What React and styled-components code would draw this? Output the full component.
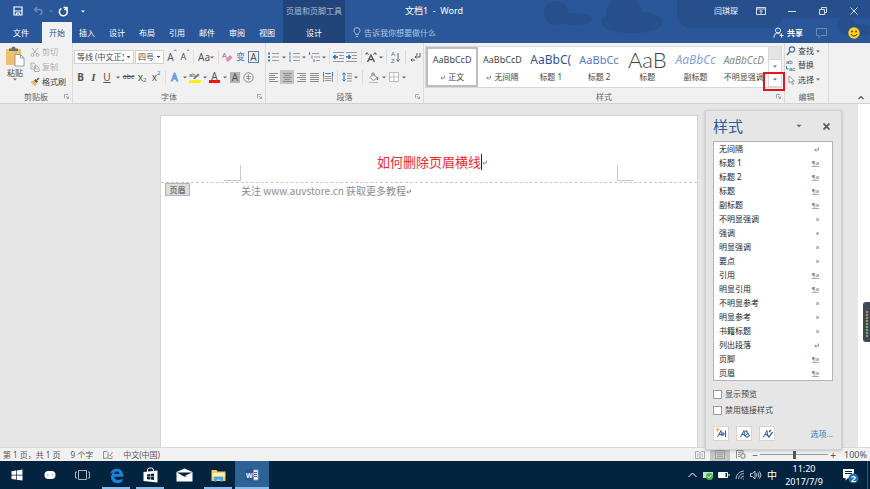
import React from 'react';
import styled, { createGlobalStyle, css } from 'styled-components';

const GlobalStyle = createGlobalStyle`
    * {
        box-sizing: border-box;
    }
    body {
        margin: 0;
        font-family: 'Noto Sans', 'Noto Sans CJK SC', sans-serif;
        font-size: 8px;
        line-height: 12px;
        color: #444;
        overflow: hidden;
    }
    button, input, select {
        font: inherit;
        color: inherit;
    }
    button {
        border: 0;
        padding: 0;
        background: none;
        white-space: nowrap;
    }
    svg {
        display: block;
        flex: none;
    }
    svg text {
        font-family: 'Liberation Sans', sans-serif;
    }
`;

const Window = styled.div`
    height: 100vh;
    display: flex;
    flex-direction: column;
    background: #e6e6e6;
`;

/* ---------- title bar and tabs ---------- */

const Header = styled.header`
    position: relative;
    background: #2a579a;
    color: #fff;
`;

const Clouds = styled.svg`
    position: absolute;
    top: 0;
    right: 0;
`;

const TitleBar = styled.div`
    position: relative;
    display: grid;
    grid-template-columns: 283px 62px 178px 1fr;
    height: 22px;
`;

const QuickAccess = styled.div`
    display: flex;
    align-items: center;
    padding-left: 8px;
`;

const BarButton = styled.button`
    width: ${(p) => p.$w || 20}px;
    height: 20px;
    display: flex;
    align-items: center;
    justify-content: center;
    gap: 3px;
    color: #fff;
    opacity: ${(p) => (p.$dim ? 0.3 : 1)};
`;

const ContextTitle = styled.div`
    background: #214579;
    color: #a9bcd8;
    line-height: 22px;
    text-align: center;
    white-space: nowrap;
`;

const DocTitle = styled.div`
    line-height: 21px;
    font-size: 9px;
    text-align: center;
`;

const WindowControls = styled.div`
    display: flex;
    align-items: center;
    justify-content: flex-end;
`;

const UserName = styled.span`
    margin-right: 7px;
`;

const TabBar = styled.nav`
    position: relative;
    display: flex;
    height: 21px;
`;

const Tab = styled.button`
    width: ${(p) => p.$w || 30}px;
    color: #fff;
    ${(p) =>
        p.$active &&
        css`
            background: #f1f1f1;
            color: #2a579a;
        `}
`;

const ContextTab = styled.button`
    width: 62px;
    margin-left: 1px;
    background: #214579;
    color: #fff;
`;

const TellMe = styled.button`
    display: flex;
    align-items: center;
    gap: 3px;
    padding-left: 8px;
    color: #b4c6e0;
`;

const TabBarEnd = styled.div`
    display: flex;
    align-items: center;
    margin-left: auto;
`;

/* ---------- ribbon ---------- */

const Ribbon = styled.section`
    display: flex;
    height: 61px;
    background: #f1f1f1;
    border-bottom: 1px solid #d2d2d2;
`;

const Group = styled.div`
    display: flex;
    flex-direction: column;
    width: ${(p) => p.$w}px;
    flex: ${(p) => (p.$grow ? '1 1 0' : 'none')};
    border-right: 1px solid #dadada;
`;

const GroupBody = styled.div`
    flex: 1;
    padding: ${(p) => p.$pad || '4px 1px 0'};
`;

const GroupLabel = styled.div`
    position: relative;
    height: 12px;
    line-height: 11px;
    text-align: center;
    color: #666;
`;

const Launcher = styled.button`
    position: absolute;
    right: 3px;
    top: 3px;
`;

const RibbonEnd = styled.div`
    width: 41px;
    display: flex;
    align-items: flex-end;
    justify-content: flex-end;
    padding: 0 6px 3px;
`;

const ToolRow = styled.div`
    display: flex;
    align-items: center;
    height: 20px;
`;

const Tool = styled.button`
    width: ${(p) => p.$w || 13}px;
    height: 14px;
    display: flex;
    align-items: center;
    justify-content: center;
    font-size: ${(p) => p.$size || 10}px;
    line-height: 12px;
    color: #555;
    background: ${(p) => (p.$active ? '#c5c5c5' : 'none')};
`;

const Divider = styled.i`
    width: 1px;
    height: 14px;
    margin: 0 ${(p) => p.$m || 2}px;
    background: #dcdcdc;
`;

const Combo = styled.select`
    appearance: none;
    width: ${(p) => p.$w}px;
    height: 14px;
    margin-right: 1px;
    padding: 0 9px 0 2px;
    border: 1px solid #d0d0d0;
    border-radius: 0;
    background:
        linear-gradient(45deg, transparent 50%, #555 50%) right 4px center / 2px 2px no-repeat,
        linear-gradient(-45deg, transparent 50%, #555 50%) right 2px center / 2px 2px no-repeat,
        #fff;
    line-height: 12px;
`;

const ClipboardLayout = styled.div`
    display: flex;
    gap: 1px;
`;

const PasteButton = styled.button`
    display: flex;
    flex-direction: column;
    align-items: center;
    width: 28px;
    padding-top: 2px;
    line-height: 11px;
`;

const Stack = styled.div`
    display: flex;
    flex-direction: column;
`;

const LabelledTool = styled.button`
    display: flex;
    align-items: center;
    gap: 2px;
    height: ${(p) => p.$h || 15}px;
    color: ${(p) => (p.$disabled ? '#b0b0b0' : '#444')};
`;

const Bold = styled.b`
    font-weight: 700;
`;

const Italic = styled.em`
    font-family: 'Liberation Serif', serif;
    font-size: 11px;
    font-weight: 700;
`;

const Strike = styled.s`
    font-size: 7px;
`;

const Underbar = styled.span`
    height: 12px;
    line-height: 10px;
    padding: 0 2px;
    border-bottom: 3px solid ${(p) => p.$color};
`;

const BoxedA = styled.span`
    width: 11px;
    line-height: 10px;
    border: 1px solid #5b82b8;
    text-align: center;
`;

const ShadedA = styled.span`
    width: 10px;
    line-height: 11px;
    background: #b5b5b5;
    text-align: center;
`;

const BlueA = styled.span`
    color: #eef5fc;
    -webkit-text-stroke: 1px #6a9fd8;
`;

const Pinyin = styled.span`
    font-size: 9px;
    color: #4c78b0;
`;

const Sub = styled.small`
    font-size: ${(p) => (p.$mark ? 8 : 6)}px;
    color: #2a6fbf;
    align-self: ${(p) => (p.$up ? 'flex-start' : 'flex-end')};
    line-height: 7px;
`;

const Gallery = styled.div`
    display: flex;
    height: 42px;
    border: 1px solid #d8d8d8;
    background: #fff;
`;

const StyleTile = styled.button`
    flex: 1 1 0;
    min-width: 0;
    overflow: hidden;
    display: flex;
    flex-direction: column;
    align-items: center;
    padding-top: ${(p) => (p.$active ? 0 : 2)}px;
    border: ${(p) => (p.$active ? '2px solid #bdbdbd' : '0')};
`;

const Preview = styled.span`
    height: 22px;
    line-height: 22px;
    font-family: ${(p) => p.$font || "'Noto Sans', sans-serif"};
    font-size: ${(p) => p.$size}px;
    font-weight: ${(p) => p.$weight || 400};
    font-style: ${(p) => (p.$italic ? 'italic' : 'normal')};
    color: ${(p) => p.$color || '#444'};
`;

const TileName = styled.span`
    display: flex;
    align-items: center;
    gap: 3px;
    line-height: 12px;
`;

const GalleryScroll = styled.div`
    position: relative;
    width: 13px;
    display: flex;
    flex-direction: column;
`;

const ScrollButton = styled.button`
    flex: 1;
    display: flex;
    align-items: center;
    justify-content: center;
    border-left: 1px solid #d8d8d8;
    border-bottom: 1px solid #d8d8d8;
    background: ${(p) => (p.$off ? '#e4e4e4' : '#fff')};
`;

const RedFrame = styled.span`
    position: absolute;
    right: -4px;
    bottom: -4px;
    width: 22px;
    height: 19px;
    border: 2px solid #e8141c;
    pointer-events: none;
`;

/* ---------- document ---------- */

const Workspace = styled.main`
    position: relative;
    flex: 1;
    display: flex;
    min-height: 0;
`;

const Canvas = styled.div`
    flex: 1;
    display: flex;
    padding: 11px 160px 0;
`;

const Page = styled.article`
    flex: 1;
    background: #fff;
    border: 1px solid #d4d4d4;
    border-bottom: 0;
`;

const PageHeader = styled.div`
    height: 67px;
    display: flex;
    align-items: flex-end;
    justify-content: space-between;
    padding: 0 63px 1px;
    border-bottom: 1px dashed #c8c8c8;
`;

const Corner = styled.i`
    width: 17px;
    height: 16px;
    border-bottom: 1px solid #c8c8c8;
    ${(p) => (p.$left ? 'border-right' : 'border-left')}: 1px solid #c8c8c8;
`;

const HeaderText = styled.h1`
    display: flex;
    align-items: center;
    margin: 0 0 9px;
    padding-left: 6px;
    font-size: 13px;
    font-weight: 400;
    line-height: 20px;
    color: #f0282d;
`;

const Caret = styled.i`
    width: 1px;
    height: 16px;
    background: #222;
`;

const PageBody = styled.div`
    display: flex;
    align-items: flex-start;
`;

const HeaderTag = styled.span`
    width: 25px;
    margin: 0 51px 0 4px;
    border: 1px solid #b4b4b4;
    background: #dcdcdc;
    line-height: 11px;
    text-align: center;
`;

const BodyText = styled.p`
    display: flex;
    align-items: center;
    margin: 0;
    font-family: 'Noto Sans CJK SC', sans-serif;
    font-size: 10px;
    line-height: 16px;
    color: #8c8c8c;
`;

const ScrollStrip = styled.div`
    width: 12px;
    display: flex;
    align-items: center;
    justify-content: flex-end;
    padding-top: 93px;
    background: #fff;
`;

const EdgeWidget = styled.div`
    width: 7px;
    height: 40px;
    padding: 9px 2px 5px 3px;
    border-radius: 3px 0 0 3px;
    background: #414958;
`;

const Meter = styled.div`
    height: 26px;
    background: repeating-linear-gradient(transparent 0 2px, #414958 2px 3px), linear-gradient(#c98d4e, #79b566 60%);
`;

/* ---------- styles pane ---------- */

const Pane = styled.aside`
    position: absolute;
    z-index: 1;
    top: 6px;
    right: 28px;
    width: 137px;
    padding: 6px 8px 8px 7px;
    border: 1px solid #d0d0d0;
    background: #e6e6e6;
    box-shadow: 0 1px 3px rgba(0, 0, 0, 0.2);
`;

const PaneHead = styled.div`
    display: flex;
    align-items: center;
    height: 24px;
    padding: 0 3px 6px 0;
    gap: 21px;
`;

const PaneTitle = styled.h2`
    margin: 0 auto 0 0;
    font-size: 15px;
    font-weight: 400;
    line-height: 18px;
    color: #2f5a9e;
`;

const StyleList = styled.ul`
    margin: 0;
    padding: 0;
    list-style: none;
    border: 1px solid #b4b4b4;
    background: #fff;
`;

const StyleItem = styled.button`
    display: flex;
    align-items: center;
    justify-content: space-between;
    width: 100%;
    height: 14px;
    padding: 0 13px 0 5px;
    color: #222;
`;

const Mark = styled.span`
    font-size: 6px;
    line-height: 6px;
    color: #777;
    border-bottom: ${(p) => (p.$under ? '1px solid #aaa' : '0')};
`;

const Checks = styled.div`
    display: flex;
    flex-direction: column;
    gap: 4px;
    padding: 7px 0 10px;
`;

const CheckLabel = styled.label`
    display: flex;
    align-items: center;
    gap: 3px;
`;

const CheckBox = styled.input`
    appearance: none;
    width: 9px;
    height: 9px;
    margin: 0;
    border: 1px solid #9a9a9a;
    background: #fff;
`;

const PaneFoot = styled.div`
    display: flex;
    align-items: center;
    gap: 7px;
`;

const PaneButton = styled.button`
    display: grid;
    place-items: center;
    width: 16px;
    height: 15px;
    border: 1px solid #d4d4d4;
    background: #fff;
`;

const OptionsLink = styled.a`
    margin-left: auto;
    color: #4472b0;
    text-decoration: none;
`;

/* ---------- status bar ---------- */

const StatusBar = styled.footer`
    display: flex;
    align-items: center;
    gap: 10px;
    height: 14px;
    padding: 0 3px;
    background: #f1f1f1;
    border-top: 1px solid #d8d8d8;
    color: #555;
`;

const Views = styled.div`
    display: flex;
    align-items: center;
    margin-left: auto;
`;

const ZoomRange = styled.input`
    appearance: none;
    width: 68px;
    height: 12px;
    margin: 0 1px;
    background: linear-gradient(#999, #999) center / 100% 1px no-repeat;
    &::-webkit-slider-thumb {
        appearance: none;
        width: 3px;
        height: 8px;
        background: #555;
    }
`;

const ZoomValue = styled.span`
    width: 30px;
    font-size: 9px;
    text-align: right;
`;

/* ---------- taskbar ---------- */

const Taskbar = styled.footer`
    display: flex;
    height: 28px;
    background: #04233f;
    color: #fff;
`;

const TaskButton = styled.button`
    display: grid;
    place-items: center;
    position: relative;
    width: ${(p) => (p.$app ? 34 : 33)}px;
    background: ${(p) => (p.$active ? '#2e6296' : 'none')};
    &::after {
        content: '';
        display: ${(p) => (p.$open ? 'block' : 'none')};
        position: absolute;
        bottom: 0;
        left: ${(p) => (p.$active ? 0 : 3)}px;
        right: ${(p) => (p.$active ? 0 : 3)}px;
        height: 2px;
        background: #86bdec;
    }
`;

const Tray = styled.div`
    display: flex;
    align-items: center;
    margin-left: auto;
`;

const TrayButton = styled.button`
    width: 16px;
    display: flex;
    justify-content: center;
    color: #fff;
    font-size: 10px;
`;

const Clock = styled.time`
    width: 48px;
    font-size: 9px;
    line-height: 13px;
    text-align: center;
`;

const Notifications = styled.button`
    width: 39px;
    padding-right: 8px;
    display: flex;
    justify-content: flex-end;
`;

const ShowDesktop = styled.button`
    align-self: stretch;
    width: 3px;
    border-left: 1px solid #3c566d;
`;

/* ---------- icons ---------- */

const Svg = ({ w = 12, h = 12, children, ...rest }) => (
    <svg
        width={w}
        height={h}
        viewBox={`0 0 ${w} ${h}`}
        fill="none"
        stroke="currentColor"
        aria-hidden="true"
        {...rest}>
        {children}
    </svg>
);

const Down = ({ w = 4, color = '#666' }) => (
    <svg width={w} height={w === 4 ? 3 : 4} viewBox="0 0 4 3" aria-hidden="true">
        <path d="M0 0.500h4L2 2.500z" fill={color} />
    </svg>
);

const SaveIcon = () => (
    <Svg w={10} h={10}>
        <path d="M1 1h8v8H1zM1 5h8M3.500 9V7h3v2" strokeWidth="1.200" />
    </Svg>
);

const UndoIcon = () => (
    <Svg w={11} h={10}>
        <path d="M4 1L1.500 3.500 4 6M2 3.500h4.500a2.500 2.500 0 0 1 0 5" strokeWidth="1.400" />
    </Svg>
);

const RedoIcon = () => (
    <Svg w={11} h={11}>
        <path d="M3.500 2.300A4 4 0 1 0 8.600 3.500" strokeWidth="1.500" />
        <path d="M5.500 1.500H9V5M9 1.500L6.500 4" strokeWidth="1.300" />
    </Svg>
);

const BulbIcon = () => (
    <Svg w={8} h={11}>
        <path
            d="M2.800 7.500C2.800 6 1 5.500 1 3.600a3 3 0 0 1 6 0c0 1.900-1.800 2.400-1.800 3.900zM2.800 9.500h2.400"
            strokeWidth="0.900"
        />
    </Svg>
);

const PersonIcon = () => (
    <Svg w={11} h={11}>
        <circle cx="5" cy="3.500" r="2.500" strokeWidth="0.900" />
        <path d="M1 10.500c0-3 1.500-4.500 4-4.500 1 0 2 .3 2.600 1M8.500 6.500v4M6.500 8.500h4" strokeWidth="0.900" />
    </Svg>
);

const SmileyIcon = () => (
    <Svg w={12} h={12} stroke="none">
        <circle cx="6" cy="6" r="5.700" fill="#ffd21f" />
        <circle cx="4" cy="4.500" r="0.900" fill="#533" />
        <circle cx="8" cy="4.500" r="0.900" fill="#533" />
        <path d="M3 7a3.200 3.200 0 0 0 6 0" stroke="#533" fill="none" />
    </Svg>
);

const LauncherIcon = () => (
    <Svg w={5} h={5} stroke="#888">
        <path d="M0.500 4V0.500H4M2 2l2.500 2.500M4.500 2.500v2h-2" strokeWidth="0.700" />
    </Svg>
);

const PasteIcon = () => (
    <Svg w={20} h={21} stroke="none">
        <path d="M1 3h15v16H1z" fill="#edc171" />
        <path d="M4 5V2.500h2.500a2 2 0 0 1 4 0H13V5z" fill="#6d6d6d" />
        <path d="M10 8.500h5.500l3.500 3.500v8H10z" fill="#fff" stroke="#888" strokeWidth="0.800" />
        <path d="M15.500 8.500V12H19" stroke="#888" strokeWidth="0.800" fill="none" />
    </Svg>
);

const CutIcon = () => (
    <Svg w={10} h={10}>
        <path d="M2 1l5 6M8 1L3 7" />
        <circle cx="2.500" cy="8" r="1.400" />
        <circle cx="7.500" cy="8" r="1.400" />
    </Svg>
);

const CopyIcon = () => (
    <Svg w={10} h={10}>
        <path d="M1 1h3l1.500 1.500V7H1zM4.500 4h2.500L9 6v3.500H4.500z" fill="#f1f1f1" />
        <path d="M6 7h1.500M2 4h1.500" />
    </Svg>
);

const BrushIcon = () => (
    <Svg w={10} h={10} stroke="none">
        <path d="M0.500 5l3-1.500 3.500 3.500-2 2.500z" fill="#eab95c" />
        <path d="M4 3.500L5.500 2 8 4.500 6.500 6z" fill="#555" />
        <path d="M7 3l2-2" stroke="#555" strokeWidth="1.500" />
    </Svg>
);

const EraserIcon = () => (
    <Svg w={11} h={12} stroke="none">
        <text x="0" y="7" fontSize="7" fill="#7a6a90">A</text>
        <path d="M3.500 8.500L8 4l2.500 2.500L6 11z" fill="#e38aa0" />
    </Svg>
);

const LINES = {
    left: [[0, 9], [0, 6], [0, 9], [0, 6]],
    center: [[0, 9], [1.5, 7.5], [0, 9], [1.5, 7.5]],
    right: [[0, 9], [3, 9], [0, 9], [3, 9]],
    justify: [[0, 9], [0, 9], [0, 9], [0, 9]],
};

const AlignIcon = ({ kind }) => (
    <Svg w={9} h={10} stroke="#8a8a8a">
        {LINES[kind].map(([a, b], i) => (
            <path key={i} d={`M${a} ${1.5 + i * 2}H${b}M${a} 9.500H${b}`} />
        ))}
    </Svg>
);

const DistributeIcon = () => (
    <Svg w={10} h={10} stroke="#999">
        <path d="M1.500 4.500h7M1.500 6.500h7M1.500 8.500h7" />
        <path d="M0.500 0v4M9.500 0v4M2 1.500h6" stroke="#3f7cc4" />
        <path d="M0.500 4v6M9.500 4v6" />
    </Svg>
);

const ListIcon = ({ kind }) => (
    <Svg w={11} h={10} stroke="#999">
        <path d={kind === 'multi' ? 'M3 1.500h7M5 5h6M7 8.500h4' : 'M4 1.500h7M4 5h7M4 8.500h7'} />
        <path
            d={
                kind === 'bullet'
                    ? 'M0 1.500h2M0 5h2M0 8.500h2'
                    : kind === 'number'
                        ? 'M1 0v3M1 3.500v3M1 7v3'
                        : 'M0.500 0v3M3 3.500v3M5 7v3'
            }
            stroke="#3f7cc4"
            strokeWidth={kind === 'bullet' ? 2 : 1}
        />
    </Svg>
);

const IndentIcon = ({ flip }) => (
    <Svg w={11} h={10} stroke="#999">
        <path d="M0 0.500h11M6 3.500h5M6 6.500h5M0 9.500h11" />
        <path
            d={flip ? 'M0 5h4M2.500 3l2 2-2 2' : 'M1 5h4M2.500 3l-2 2 2 2'}
            stroke="#2b6cb8"
            strokeWidth="1.300"
        />
    </Svg>
);

const ScaleIcon = () => (
    <Svg w={12} h={11} stroke="#555">
        <path d="M2.500 10L6 3l3.500 7M4 7.500h4" strokeWidth="1.400" />
        <path d="M1 1l3 1.500M11 1L8 2.500M1 3V1h2M11 3V1H9" strokeWidth="0.800" />
    </Svg>
);

const SortIcon = () => (
    <Svg w={11} h={14} stroke="none">
        <text x="1" y="6" fontSize="6" fill="#2b6cb8">A</text>
        <text x="1" y="13" fontSize="6" fill="#7b4fa0">Z</text>
        <path d="M8 3v8M6.500 9.500L8 11.500l1.500-2" stroke="#666" fill="none" />
    </Svg>
);

const MarksIcon = () => (
    <Svg w={11} h={10} stroke="#555">
        <path d="M10 1v4H5M6.500 3.500L5 5l1.500 1.500M7 1v2.500M1 8h4M2.500 6.500L1 8l1.500 1.500" />
    </Svg>
);

const SpacingIcon = () => (
    <Svg w={10} h={10} stroke="#999">
        <path d="M5 1.500h5M5 4h5M5 6.500h5M5 9h5" />
        <path d="M2 1v8M0.500 2.500L2 0.800l1.500 1.700M0.500 7.500L2 9.200l1.500-1.700" stroke="#2b6cb8" />
    </Svg>
);

const BucketIcon = () => (
    <Svg w={11} h={11} stroke="#888">
        <path d="M2 5.500L5.500 2 9 5.500 5.500 8.500z" fill="#fff" />
        <path d="M4 4V1h2v3" />
        <path d="M9.500 5v3" stroke="#3f7cc4" strokeWidth="1.500" />
        <path d="M1 10.500h9" stroke="#bbb" />
    </Svg>
);

const BorderIcon = () => (
    <Svg w={10} h={10} stroke="#bbb">
        <path d="M0.500 0.500h9v9h-9zM5 1v8M1 5h8" fill="#fff" />
    </Svg>
);

const HighlightIcon = () => (
    <Svg w={12} h={12} stroke="none">
        <text x="0" y="6" fontSize="6" fill="#555">ab</text>
        <path d="M4 7.500l5-5 1.500 1.500L6 8z" fill="#777" />
        <path d="M0 9h12v3H0z" fill="#ffee12" />
    </Svg>
);

const CircleIcon = () => (
    <Svg w={11} h={11} stroke="#888">
        <circle cx="5.500" cy="5.500" r="4.700" />
        <path d="M3 4.500h5M5.500 2.500v6M3.500 6.500h4" strokeWidth="0.800" />
    </Svg>
);

const FindIcon = () => (
    <Svg w={10} h={10} stroke="#3d6cae">
        <circle cx="6" cy="3.500" r="2.700" strokeWidth="1.200" />
        <path d="M4 5.500L1 9" strokeWidth="1.500" />
    </Svg>
);

const ReplaceIcon = () => (
    <Svg w={10} h={14} stroke="none">
        <text x="0" y="6" fontSize="6" fill="#555">ab</text>
        <text x="3" y="13" fontSize="6" fill="#2b5fa8">ac</text>
        <path d="M0.500 8v3h2" stroke="#2b5fa8" strokeWidth="0.800" fill="none" />
    </Svg>
);

const SelectIcon = () => (
    <Svg w={10} h={10} stroke="#888">
        <path d="M3 1v7l2-1.700L6.500 9.500l1-.5L6.200 6H8.500z" fill="#fff" strokeWidth="0.800" />
    </Svg>
);

const ReturnMark = () => (
    <Svg w={5} h={5} stroke="#777">
        <path d="M4.500 0.500V3H1M2.200 1.700L0.800 3l1.400 1.500" strokeWidth="0.800" />
    </Svg>
);

const PaneIcon = ({ kind }) => (
    <Svg w={11} h={11} stroke="none">
        {kind === 'new' && <path d="M0 0l4 1-1.500 1.500L1 4z" fill="#f0a84a" />}
        <path d="M1.500 9L5 2.500 5.500 8M3 6.500h2.500" stroke="#2f5a9e" fill="none" />
        {kind === 'new' && <path d="M7 8V4M9.500 2.500V9M6 6h4" stroke="#2f5a9e" />}
        {kind === 'inspect' && (
            <path d="M5.500 4L8 2.500V5M6 8l3-3 1.500 3-2.500 1.500z" stroke="#2f5a9e" fill="#dfe9f6" />
        )}
        {kind === 'manage' && (
            <path d="M5 6.500l2 2.500 3.500-5M7 4l2-2" stroke="#2f5a9e" fill="none" strokeWidth="1.300" />
        )}
    </Svg>
);

const BookIcon = () => (
    <Svg w={10} h={8} stroke="#999">
        <path d="M0.500 0.500H4L5 1.500 6 0.500h3.500v7H6L5 7 4 7.500H0.500zM5 1.500V7M2 3h1.500M2 5h1.500M6.500 3H8M6.500 5H8" strokeWidth="0.800" />
    </Svg>
);

const PrintViewIcon = () => (
    <Svg w={10} h={9} stroke="#999">
        <path d="M0.500 0.500h9v8h-9zM2 2.500h6M2 4.500h6M2 6.500h6" strokeWidth="0.800" />
    </Svg>
);

const WebViewIcon = () => (
    <Svg w={10} h={9} stroke="#777">
        <path d="M0.500 8.500v-8H7V3M2 2.500h3.500M2 4.500h2.500M2 6.500h2" strokeWidth="0.800" />
        <circle cx="7" cy="6" r="2.300" />
    </Svg>
);

const ProofIcon = () => (
    <Svg w={10} h={8} stroke="#888">
        <path d="M9 5v2.500H5.500L5 7 0.500 7.500v-7H4l1 1V7M6 3.500l1.200 1.500L9.500 1" strokeWidth="0.900" />
    </Svg>
);

const WindowsIcon = () => (
    <Svg w={12} h={12} stroke="none">
        <path d="M0.500 2.200L5 1.500v4.200H0.500zM5.700 1.400L11.500 0.500v5.200H5.700zM0.500 6.400H5v4.200L0.500 9.900zM5.700 6.400h5.800v5.200L5.700 10.700z" fill="#fff" />
    </Svg>
);

const CortanaIcon = () => (
    <Svg w={12} h={10} stroke="none">
        <rect x="0.500" y="1" width="11" height="8" rx="4" fill="#fff" />
        <path d="M3 5h1.500M7.500 5H9" stroke="#7c8c9b" />
    </Svg>
);

const TaskViewIcon = () => (
    <Svg w={15} h={10} stroke="#aab6c1">
        <path d="M3.500 0.500h8v9h-8zM2 2H0.500v6H2M13 2h1.500v6H13" />
    </Svg>
);

const EdgeIcon = () => (
    <Svg w={15} h={15} stroke="none">
        <path
            d="M1 6.800C1.500 2.800 4.500 0.700 7.800 0.700c4 0 6.400 2.800 6.400 6.500v1.500H5.200c.2 2.200 2 3.200 4.200 3.200 1.500 0 2.900-.4 4-1.100v3c-1.300.8-3 1.200-4.800 1.200-4 0-6.600-2.300-6.600-5.800 0-2.300 1.300-4.200 3.300-5.100C3 4.500 1.600 5.500 1 6.800zM5.300 6h5.100c0-1.800-1-2.700-2.500-2.700S5.500 4.300 5.300 6z"
            fill="#1683de"
        />
    </Svg>
);

const StoreIcon = () => (
    <Svg w={15} h={16} stroke="none">
        <path d="M0.500 5l14-1.500v12L0.500 14z" fill="#fff" />
        <path d="M4.500 5V3a2 2 0 0 1 2-2h2a2 2 0 0 1 2 2v1.500" stroke="#fff" fill="none" />
        <path d="M4 7.400l3-.3V9.500H4zM7.600 7l3.400-.4v2.900H7.600zM4 10.100h3v2.400l-3-.3zM7.600 10.100H11V13l-3.400-.4z" fill="#04233f" />
    </Svg>
);

const MailIcon = () => (
    <Svg w={17} h={14} stroke="none">
        <path d="M0.500 4L8.500 0.500l8 3.500v9.500H0.500z" fill="#fff" />
        <path d="M1 4.500h15l-7 3.200 2.500 1.500-4-1z" fill="#04233f" />
    </Svg>
);

const FolderIcon = () => (
    <Svg w={15} h={13} stroke="none">
        <path d="M0.500 1h5l1 1.500h8V12H0.500z" fill="#f3cd60" />
        <path d="M1.500 4h12v4h-12z" fill="#fff0b0" />
        <path d="M3 12.500V7.500h9v5H9.500v-2h-4v2z" fill="#4aa8dc" />
    </Svg>
);

const WordIcon = () => (
    <Svg w={14} h={14} stroke="none">
        <path d="M7 2h6v10H7z" fill="#f4f6fb" stroke="#8fa4cf" strokeWidth="0.800" />
        <path d="M9 4.500h3M9 6.500h3M9 8.500h3" stroke="#4967ac" />
        <path d="M0 1.500L8.500 0v14L0 12.500z" fill="#2b579a" />
        <text x="1" y="9.500" fontSize="7" fontWeight="700" fill="#fff">W</text>
    </Svg>
);

const NotifyIcon = () => (
    <Svg w={17} h={17} stroke="none">
        <path d="M1 2h11v9H6l-2.500 2.500V11H1z" fill="#fff" />
        <path d="M3 4.500h7M3 6.500h7" stroke="#04233f" />
        <circle cx="11.500" cy="11.500" r="5" fill="#1d6fb1" />
        <text x="9" y="15" fontSize="9" fontWeight="700" fill="#fff">2</text>
    </Svg>
);

/* ---------- data ---------- */

const tabs = ['插入', '设计', '布局', '引用', '邮件', '审阅', '视图'];

const tiles = [
    { name: '正文', text: 'AaBbCcD', size: 9, mark: true, active: true },
    { name: '无间隔', text: 'AaBbCcD', size: 9, mark: true },
    { name: '标题 1', text: 'AaBbC(', size: 12, color: '#2f5496' },
    { name: '标题 2', text: 'AaBbCc', size: 11, color: '#4f7cc0' },
    { name: '标题', text: 'AaB', size: 22, weight: 300, font: "'Lato', sans-serif" },
    { name: '副标题', text: 'AaBbCc', size: 12, color: '#7fa3d6', italic: true },
    { name: '不明显强调', text: 'AaBbCcD', size: 10, color: '#888', italic: true },
];

const styleNames = [
    ['无间隔', 'p'],
    ['标题 1', 'link'],
    ['标题 2', 'link'],
    ['标题', 'link'],
    ['副标题', 'link'],
    ['不明显强调', 'char'],
    ['强调', 'char'],
    ['明显强调', 'char'],
    ['要点', 'char'],
    ['引用', 'link'],
    ['明显引用', 'link'],
    ['不明显参考', 'char'],
    ['明显参考', 'char'],
    ['书籍标题', 'char'],
    ['列出段落', 'p'],
    ['页脚', 'link'],
    ['页眉', 'link'],
];

const marks = {
    p: <ReturnMark />,
    link: <Mark $under>¶a</Mark>,
    char: <Mark>a</Mark>,
};

/* ---------- sections ---------- */

const AppHeader = () => (
    <Header>
        <Clouds width="330" height="43" fill="#264f8b" aria-hidden="true">
            <circle cx="16" cy="13" r="12" />
            <ellipse cx="34" cy="19" rx="18" ry="6" />
            <circle cx="84" cy="14" r="18" />
            <ellipse cx="92" cy="22" rx="31" ry="11" />
            <rect x="137" y="-12" width="106" height="40" rx="14" />
            <rect x="220" y="-12" width="118" height="30" rx="10" />
            <circle cx="306" cy="26" r="9" />
            <ellipse cx="320" cy="30" rx="14" ry="6" />
        </Clouds>
        <TitleBar>
            <QuickAccess>
                <BarButton aria-label="保存"><SaveIcon /></BarButton>
                <BarButton aria-label="撤消" $dim><UndoIcon /></BarButton>
                <BarButton $w={5} aria-label="撤消选项" $dim><Down color="#fff" /></BarButton>
                <BarButton aria-label="重复"><RedoIcon /></BarButton>
                <BarButton aria-label="自定义"><Down color="#fff" /></BarButton>
            </QuickAccess>
            <ContextTitle>页眉和页脚工具</ContextTitle>
            <DocTitle>文档1&nbsp; -&nbsp; Word</DocTitle>
            <WindowControls>
                <UserName>闫琪琛</UserName>
                <BarButton $w={31} aria-label="功能区显示选项">
                    <Svg w={10} h={8}><path d="M0.500 0.500h9v7h-9zM0.500 2h9M5 7V3.500M3.500 5L5 3.500 6.500 5" strokeWidth="0.800" /></Svg>
                </BarButton>
                <BarButton $w={31} aria-label="最小化"><Svg w={8} h={8}><path d="M0 4.500h8" strokeWidth="0.800" /></Svg></BarButton>
                <BarButton $w={31} aria-label="还原"><Svg w={8} h={8}><path d="M0.500 2.500h5v5h-5zM2.500 2V0.500h5v5H6" strokeWidth="0.800" /></Svg></BarButton>
                <BarButton $w={32} aria-label="关闭"><Svg w={8} h={8}><path d="M0.500 0.500l7 7M7.500 0.500l-7 7" strokeWidth="0.800" /></Svg></BarButton>
            </WindowControls>
        </TitleBar>
        <TabBar>
            <Tab $w={42}>文件</Tab>
            <Tab $active>开始</Tab>
            {tabs.map((t) => (
                <Tab key={t}>{t}</Tab>
            ))}
            <ContextTab>设计</ContextTab>
            <TellMe><BulbIcon />告诉我你想要做什么</TellMe>
            <TabBarEnd>
                <BarButton $w={32}><PersonIcon /><b>共享</b></BarButton>
                <BarButton $w={34} aria-label="批注" $dim>
                    <Svg w={11} h={10}><path d="M0.500 0.500h10v7H5L3 9.500v-2H0.500z" /></Svg>
                </BarButton>
                <BarButton $w={32} aria-label="反馈"><SmileyIcon /></BarButton>
            </TabBarEnd>
        </TabBar>
    </Header>
);

const GroupFoot = ({ children, launcher = true }) => (
    <GroupLabel>
        {children}
        {launcher && <Launcher aria-label={`${children}选项`}><LauncherIcon /></Launcher>}
    </GroupLabel>
);

const FontGroup = () => (
    <Group $w={193}>
        <GroupBody>
            <ToolRow>
                <Combo $w={60} aria-label="字体"><option>等线 (中文正文)</option></Combo>
                <Combo $w={29} aria-label="字号"><option>四号</option></Combo>
                <Tool $w={14}>A<Sub $up $mark>ˆ</Sub></Tool>
                <Tool $w={12} $size={9}>A<Sub $up $mark>ˇ</Sub></Tool>
                <Divider />
                <Tool $w={20}>Aa<Down /></Tool>
                <Divider />
                <Tool aria-label="清除格式"><EraserIcon /></Tool>
                <Tool aria-label="拼音指南"><Pinyin>变</Pinyin></Tool>
                <Tool aria-label="字符边框"><BoxedA>A</BoxedA></Tool>
            </ToolRow>
            <ToolRow>
                <Tool><Bold>B</Bold></Tool>
                <Tool><Italic>I</Italic></Tool>
                <Tool $w={14}><u>U</u></Tool>
                <Tool $w={8} aria-label="下划线选项"><Down /></Tool>
                <Tool><Strike>abc</Strike></Tool>
                <Tool $w={14}>x<Sub>2</Sub></Tool>
                <Tool $w={14}>x<Sub $up>2</Sub></Tool>
                <Divider />
                <Tool><BlueA>A</BlueA></Tool>
                <Tool $w={7} aria-label="文本效果选项"><Down /></Tool>
                <Tool aria-label="突出显示"><HighlightIcon /></Tool>
                <Tool $w={7} aria-label="突出显示选项"><Down /></Tool>
                <Tool><Underbar $color="#f01414">A</Underbar></Tool>
                <Tool $w={7} aria-label="颜色选项"><Down /></Tool>
                <Tool $w={14}><ShadedA>A</ShadedA></Tool>
                <Tool aria-label="带圈字符"><CircleIcon /></Tool>
            </ToolRow>
        </GroupBody>
        <GroupFoot>字体</GroupFoot>
    </Group>
);

const ParagraphGroup = () => (
    <Group $w={158}>
        <GroupBody>
            <ToolRow>
                <Tool aria-label="项目符号"><ListIcon kind="bullet" /></Tool>
                <Tool $w={8} aria-label="符号选项"><Down /></Tool>
                <Tool aria-label="编号"><ListIcon kind="number" /></Tool>
                <Tool $w={8} aria-label="编号选项"><Down /></Tool>
                <Tool aria-label="多级列表"><ListIcon kind="multi" /></Tool>
                <Tool $w={6} aria-label="列表选项"><Down /></Tool>
                <Divider />
                <Tool aria-label="减少缩进"><IndentIcon /></Tool>
                <Tool aria-label="增加缩进"><IndentIcon flip /></Tool>
                <Divider $m={3} />
                <Tool aria-label="中文版式"><ScaleIcon /></Tool>
                <Tool $w={7} aria-label="版式选项"><Down /></Tool>
                <Divider />
                <Tool aria-label="排序"><SortIcon /></Tool>
                <Divider $m={3} />
                <Tool aria-label="编辑标记"><MarksIcon /></Tool>
            </ToolRow>
            <ToolRow>
                <Tool aria-label="左对齐"><AlignIcon kind="left" /></Tool>
                <Tool $w={14} $active aria-label="居中"><AlignIcon kind="center" /></Tool>
                <Tool $w={14} aria-label="右对齐"><AlignIcon kind="right" /></Tool>
                <Tool aria-label="两端对齐"><AlignIcon kind="justify" /></Tool>
                <Tool $w={14} aria-label="分散对齐"><DistributeIcon /></Tool>
                <Divider />
                <Tool aria-label="行距"><SpacingIcon /></Tool>
                <Tool $w={6} aria-label="行距选项"><Down /></Tool>
                <Divider $m={3} />
                <Tool $w={14} aria-label="底纹"><BucketIcon /></Tool>
                <Tool $w={7} aria-label="底纹选项"><Down /></Tool>
                <Tool aria-label="边框"><BorderIcon /></Tool>
                <Tool $w={7} aria-label="边框选项"><Down /></Tool>
            </ToolRow>
        </GroupBody>
        <GroupFoot>段落</GroupFoot>
    </Group>
);

const StylesGroup = () => (
    <Group $grow>
        <GroupBody $pad="3px 2px 0 1px">
            <Gallery>
                {tiles.map((t) => (
                    <StyleTile key={t.name} $active={t.active}>
                        <Preview
                            $size={t.size}
                            $color={t.color}
                            $weight={t.weight}
                            $italic={t.italic}
                            $font={t.font}>
                            {t.text}
                        </Preview>
                        <TileName>{t.mark && <ReturnMark />}{t.name}</TileName>
                    </StyleTile>
                ))}
                <GalleryScroll>
                    <ScrollButton $off aria-label="上一行" />
                    <ScrollButton aria-label="下一行"><Down /></ScrollButton>
                    <ScrollButton aria-label="其他"><Down /></ScrollButton>
                    <RedFrame />
                </GalleryScroll>
            </Gallery>
        </GroupBody>
        <GroupFoot>样式</GroupFoot>
    </Group>
);

const AppRibbon = () => (
    <Ribbon>
        <Group $w={73}>
            <GroupBody $pad="1px 1px 0">
                <ClipboardLayout>
                    <PasteButton><PasteIcon />粘贴<Down /></PasteButton>
                    <Stack>
                        <LabelledTool $disabled><CutIcon />剪切</LabelledTool>
                        <LabelledTool $disabled><CopyIcon />复制</LabelledTool>
                        <LabelledTool><BrushIcon />格式刷</LabelledTool>
                    </Stack>
                </ClipboardLayout>
            </GroupBody>
            <GroupFoot>剪贴板</GroupFoot>
        </Group>
        <FontGroup />
        <ParagraphGroup />
        <StylesGroup />
        <Group $w={44}>
            <GroupBody $pad="1px 1px 0">
                <Stack>
                    <LabelledTool $h={14}><FindIcon />查找<Down /></LabelledTool>
                    <LabelledTool $h={14}><ReplaceIcon />替换</LabelledTool>
                    <LabelledTool $h={15}><SelectIcon />选择<Down /></LabelledTool>
                </Stack>
            </GroupBody>
            <GroupFoot launcher={false}>编辑</GroupFoot>
        </Group>
        <RibbonEnd>
            <button aria-label="折叠功能区">
                <Svg w={6} h={5} stroke="#555"><path d="M0.500 4L3 1.500 5.500 4" strokeWidth="1.200" /></Svg>
            </button>
        </RibbonEnd>
    </Ribbon>
);

const StylesPane = () => (
    <Pane>
        <PaneHead>
            <PaneTitle>样式</PaneTitle>
            <button aria-label="窗格选项"><Down w={6} /></button>
            <button aria-label="关闭窗格">
                <Svg w={7} h={7} stroke="#555"><path d="M0.500 0.500l6 6M6.500 0.500l-6 6" strokeWidth="1.600" /></Svg>
            </button>
        </PaneHead>
        <StyleList>
            {styleNames.map(([name, kind]) => (
                <li key={name}>
                    <StyleItem>
                        {name}
                        {marks[kind]}
                    </StyleItem>
                </li>
            ))}
        </StyleList>
        <Checks>
            <CheckLabel><CheckBox type="checkbox" />显示预览</CheckLabel>
            <CheckLabel><CheckBox type="checkbox" />禁用链接样式</CheckLabel>
        </Checks>
        <PaneFoot>
            <PaneButton aria-label="新建样式"><PaneIcon kind="new" /></PaneButton>
            <PaneButton aria-label="样式检查器"><PaneIcon kind="inspect" /></PaneButton>
            <PaneButton aria-label="管理样式"><PaneIcon kind="manage" /></PaneButton>
            <OptionsLink href="#options">选项...</OptionsLink>
        </PaneFoot>
    </Pane>
);

const AppTaskbar = () => (
    <Taskbar>
        <TaskButton aria-label="开始"><WindowsIcon /></TaskButton>
        <TaskButton aria-label="Cortana"><CortanaIcon /></TaskButton>
        <TaskButton aria-label="任务视图"><TaskViewIcon /></TaskButton>
        <TaskButton $app $open aria-label="Edge"><EdgeIcon /></TaskButton>
        <TaskButton $app $open aria-label="应用商店"><StoreIcon /></TaskButton>
        <TaskButton $app aria-label="邮件"><MailIcon /></TaskButton>
        <TaskButton $app $open aria-label="文件资源管理器"><FolderIcon /></TaskButton>
        <TaskButton $app $open $active aria-label="Word"><WordIcon /></TaskButton>
        <Tray>
            <TrayButton aria-label="隐藏的图标">
                <Svg w={9} h={6}><path d="M0.500 5l4-4 4 4" /></Svg>
            </TrayButton>
            <TrayButton aria-label="安全">
                <Svg w={12} h={11} stroke="none">
                    <path d="M1 2h10v6H1z" fill="#bfe3c1" />
                    <circle cx="7.500" cy="6.500" r="3.500" fill="#42b649" />
                    <path d="M5.500 6.500L7 8l2.500-3" stroke="#fff" fill="none" />
                </Svg>
            </TrayButton>
            <TrayButton aria-label="电池">
                <Svg w={12} h={8}>
                    <path d="M0.500 1.500h9v5h-9zM11 3v2" />
                    <path d="M1 2h6v4H1z" fill="#fff" />
                </Svg>
            </TrayButton>
            <TrayButton aria-label="网络">
                <Svg w={10} h={10} stroke="#aab6c1">
                    <path d="M1 9A8 8 0 0 1 9 1M3.500 9A5.500 5.500 0 0 1 9 3.500M6 9a3 3 0 0 1 3-3M8.500 8.500v1" />
                </Svg>
            </TrayButton>
            <TrayButton aria-label="音量">
                <Svg w={12} h={10} stroke="#d5dce2">
                    <path d="M0.500 3.500h2L5 1v8L2.500 6.500h-2zM6.500 3.500q1 1.500 0 3M8 2.500q2 2.500 0 5M9.500 1.500q3 3.500 0 7" strokeWidth="0.900" />
                </Svg>
            </TrayButton>
            <TrayButton>中</TrayButton>
            <Clock>11:20<br />2017/7/9</Clock>
            <Notifications aria-label="通知"><NotifyIcon /></Notifications>
        </Tray>
        <ShowDesktop aria-label="显示桌面" />
    </Taskbar>
);

const App = () => (
    <>
        <GlobalStyle />
        <Window>
            <AppHeader />
            <AppRibbon />
            <Workspace>
                <Canvas>
                    <Page>
                        <PageHeader>
                            <Corner $left />
                            <HeaderText>如何删除页眉横线<Caret /><ReturnMark /></HeaderText>
                            <Corner />
                        </PageHeader>
                        <PageBody>
                            <HeaderTag>页眉</HeaderTag>
                            <BodyText>关注 www.auvstore.cn 获取更多教程<ReturnMark /></BodyText>
                        </PageBody>
                    </Page>
                </Canvas>
                <ScrollStrip><EdgeWidget><Meter /></EdgeWidget></ScrollStrip>
                <StylesPane />
            </Workspace>
            <StatusBar>
                <span>第 1 页，共 1 页</span>
                <span>9 个字</span>
                <ProofIcon />
                <span>中文(中国)</span>
                <Views>
                    <Tool $w={20} aria-label="阅读视图"><BookIcon /></Tool>
                    <Tool $w={20} $active aria-label="页面视图"><PrintViewIcon /></Tool>
                    <Tool $w={21} aria-label="Web 版式视图"><WebViewIcon /></Tool>
                    <Tool $w={8} aria-label="缩小">−</Tool>
                    <ZoomRange type="range" aria-label="显示比例" defaultValue="50" />
                    <Tool $w={8} aria-label="放大">+</Tool>
                    <ZoomValue>100%</ZoomValue>
                </Views>
            </StatusBar>
            <AppTaskbar />
        </Window>
    </>
);

export default App;
